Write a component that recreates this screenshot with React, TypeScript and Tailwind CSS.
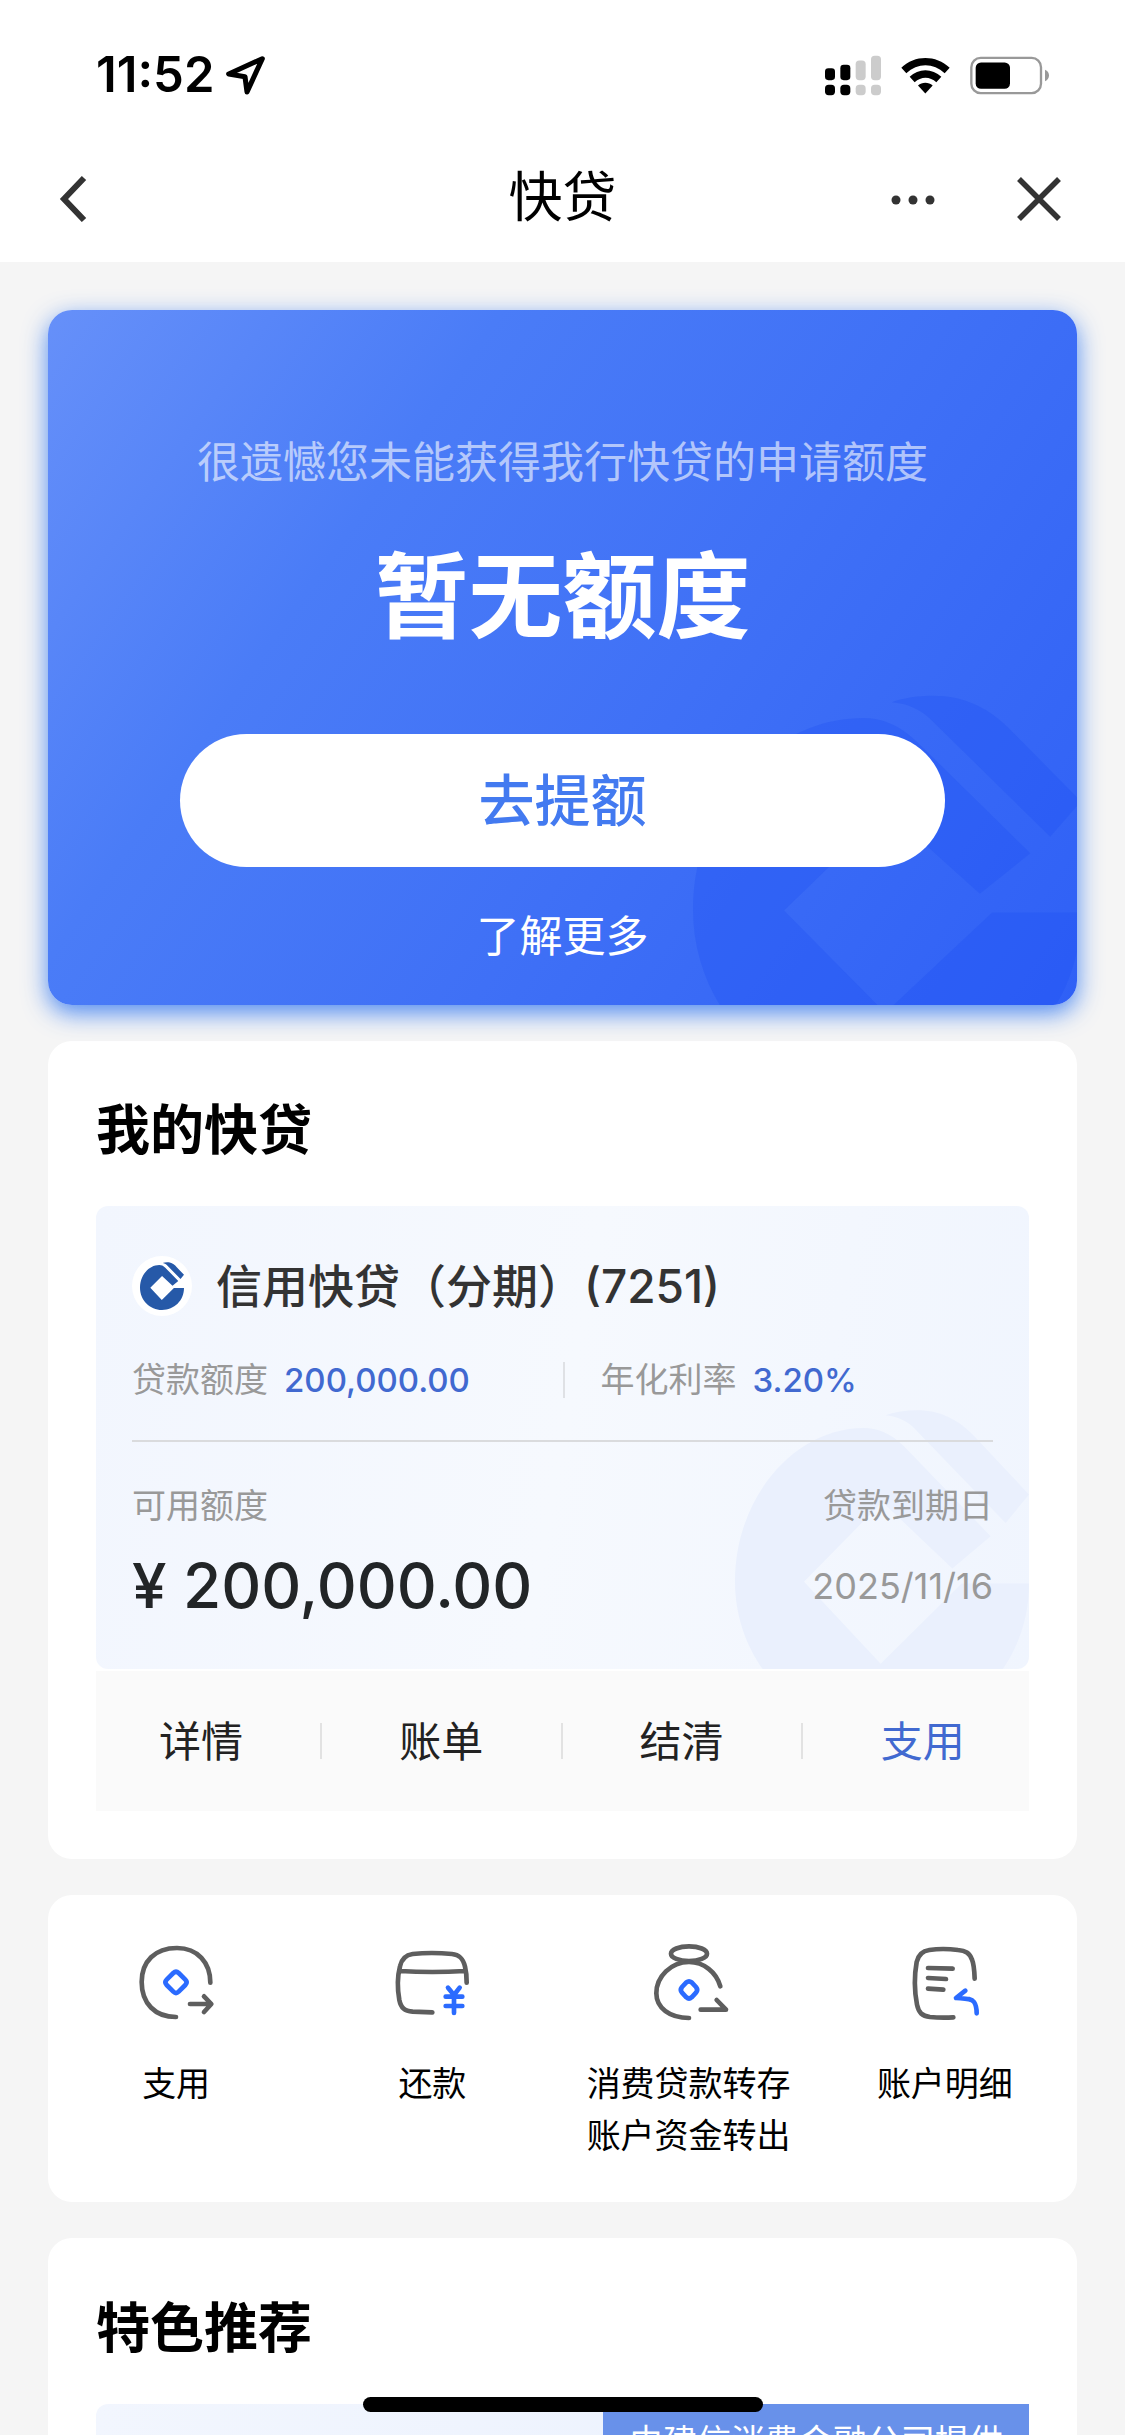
import React from "react";

function BankMark({ className }: { className: string }) {
  return (
    <svg viewBox="103 50 882 970" preserveAspectRatio="none" fill="currentColor" className={className} aria-hidden="true">
      <path d="M985 577H783L540 818L310 572L545 332L755 532L870 435L610 165C570 125 530 110 490 110C280 110 103 320 103 570C103 820 300 1020 545 1020C790 1020 985 830 985 577Z" />
      <path d="M555 72C600 55 660 53 700 62C760 76 800 110 840 155L985 310L915 395L640 110C620 90 590 75 555 72Z" />
    </svg>
  );
}

function StatusBar() {
  return (
    <div className="flex h-[134px] items-center justify-between pt-4 pr-[75px] pl-24">
      <div className="flex items-center gap-3">
        <span className="text-[49px] leading-[60px] font-semibold">11:52</span>
        <svg viewBox="446 46 118 118" className="size-10" fill="none" stroke="#000" strokeWidth="15" strokeLinejoin="round" aria-hidden="true">
          <path d="M553 57L454 102L502 110L508 155Z" />
        </svg>
      </div>
      <div className="flex items-center gap-5">
        <svg viewBox="39 42 168 122" className="h-[41px] w-14" aria-hidden="true">
          <rect x="39" y="81" width="30" height="36" rx="10" />
          <rect x="85" y="71" width="30" height="46" rx="10" />
          <rect x="131" y="58" width="30" height="59" rx="11" fill="#ccc" />
          <rect x="177" y="44" width="30" height="73" rx="11" fill="#ccc" />
          <rect x="39" y="131" width="30" height="31" rx="11" />
          <rect x="85" y="131" width="30" height="31" rx="11" />
          <rect x="131" y="131" width="30" height="31" rx="11" fill="#ccc" />
          <rect x="177" y="131" width="30" height="31" rx="11" fill="#ccc" />
        </svg>
        <svg viewBox="270 42 147 122" className="h-[41px] w-[49px]" aria-hidden="true">
          <path d="M271 80C311 41 375 41 416 80L401 96C368 64 319 64 286 96Z" />
          <path d="M296 107C322 81 364 81 391 107L376 123C357 105 330 105 311 123Z" />
          <path d="M321 133C333 122 353 122 365 133L343 157Z" />
        </svg>
        <svg viewBox="480 42 240 122" className="h-[41px] w-20" aria-hidden="true">
          <rect x="484" y="50" width="209" height="106" rx="28" fill="none" stroke="#999" strokeWidth="7" />
          <rect x="497" y="64" width="103" height="79" rx="16" />
          <path d="M705 86C721 92 721 114 705 120Z" fill="#999" />
        </svg>
      </div>
    </div>
  );
}

function NavBar() {
  return (
    <div className="grid h-32 grid-cols-[1fr_auto_1fr] items-center px-14">
      <button aria-label="返回" className="flex size-12 items-center">
        <svg viewBox="0 0 48 48" className="size-12" fill="none" stroke="#333" strokeWidth="6" aria-hidden="true">
          <path d="M28 4L8 25L28 46" />
        </svg>
      </button>
      <h1 className="text-center text-[54px] leading-[70px]">快贷</h1>
      <div className="flex items-center justify-end gap-[78px] pr-[6px]">
        <button aria-label="更多">
          <svg viewBox="0 0 48 48" className="size-12" fill="#333" aria-hidden="true">
            <circle cx="7" cy="26" r="4.5" />
            <circle cx="24" cy="26" r="4.5" />
            <circle cx="41" cy="26" r="4.5" />
          </svg>
        </button>
        <button aria-label="关闭">
          <svg viewBox="0 0 48 48" className="size-12" fill="none" stroke="#333" strokeWidth="5.5" aria-hidden="true">
            <path d="M4 5L44 45M44 5L4 45" />
          </svg>
        </button>
      </div>
    </div>
  );
}

function Hero() {
  return (
    <section className="relative flex flex-col items-center rounded-3xl bg-[linear-gradient(125deg,#6690f9_0%,#4a7cf7_30%,#3f70f6_60%,#2f60f6_100%)] px-[132px] pt-[122px] pb-[39px] text-white shadow-[0_8px_24px_rgba(50,120,240,0.85)]">
      <div className="absolute inset-0 overflow-hidden rounded-3xl">
        <BankMark className="absolute -right-1 bottom-[-92px] h-[404px] w-[388px] text-[#1f4ff2]/30" />
      </div>
      <p className="relative text-[43px] leading-[60px] whitespace-nowrap text-white/60">很遗憾您未能获得我行快贷的申请额度</p>
      <p className="relative mt-[45px] text-[94px] leading-[120px] font-bold">暂无额度</p>
      <button className="relative mt-[77px] h-[133px] w-full rounded-full bg-white text-[56px] font-medium text-[#437af0]">去提额</button>
      <a href="#more" className="relative mt-[39px] text-[43px] leading-[60px]">了解更多</a>
    </section>
  );
}

const actions = ["详情", "账单", "结清", "支用"];

function MyLoans() {
  return (
    <section className="mt-9 rounded-3xl bg-white px-12 pt-[55px] pb-12">
      <h2 className="text-[54px] leading-[70px] font-bold">我的快贷</h2>
      <div className="relative mt-10 overflow-hidden rounded-xl bg-[linear-gradient(100deg,#f2f6fe_0%,#f6f9fe_50%,#f0f5fe_100%)] px-9 pt-[50px] pb-[43px]">
        <BankMark className="absolute right-0 bottom-[-62px] h-[323px] w-[294px] text-[#eaf0fd]" />
        <div className="relative flex items-center gap-6 text-[#333]">
          <span className="flex size-[60px] items-center justify-center rounded-full bg-white">
            <BankMark className="h-12 w-11 text-[#2659a8]" />
          </span>
          <h3 className="text-[46px] leading-[60px] font-medium">信用快贷（分期）(7251)</h3>
        </div>
        <div className="relative mt-10 grid grid-cols-2 items-center text-[34px] leading-[48px] text-[#999]">
          <p className="flex items-center gap-4">
            贷款额度<span className="text-[33px] font-medium text-[#4169d0]">200,000.00</span>
          </p>
          <div className="flex items-center">
            <span className="h-9 w-0.5 bg-[#dfe1e5]" />
            <p className="ml-9 flex items-center gap-4">
              年化利率<span className="text-[33px] font-medium text-[#4169d0]">3.20%</span>
            </p>
          </div>
        </div>
        <hr className="relative mt-9 border-t-2 border-[#dadbdd]" />
        <div className="relative mt-10 flex justify-between">
          <div>
            <p className="text-[34px] leading-[48px] text-[#999]">可用额度</p>
            <p className="mt-4 text-[62px] leading-[80px] font-medium text-[#222527]">¥ 200,000.00</p>
          </div>
          <div className="text-right text-[#999]">
            <p className="text-[34px] leading-[48px]">贷款到期日</p>
            <p className="mt-4 text-[36px] leading-[80px]">2025/11/16</p>
          </div>
        </div>
      </div>
      <div className="mt-0.5 overflow-hidden bg-[#fafafa]">
        <div className="-mx-3.5 grid h-[140px] grid-cols-4 items-center">
          {actions.map((label, i) => (
            <div key={label} className="flex items-center">
              <button className={i === 3 ? "flex-1 text-[42px] text-[#4169d0]" : "flex-1 text-[42px] text-[#222]"}>{label}</button>
              {i < 3 && <span className="h-9 w-0.5 bg-[#e2e2e2]" />}
            </div>
          ))}
        </div>
      </div>
    </section>
  );
}

const services = [
  {
    lines: ["支用"],
    view: "68 60 258 258",
    art: (
      <>
        <path d="M300 188C300 128 262 84 200 84C134 84 94 124 94 186C94 250 134 291 197 291" />
        <path d="M239 252H302M281 229L303 252L281 276" />
        <path stroke="#2b6bff" d="M189 159Q197 151 205 159L225 179Q233 187 225 195L205 215Q197 223 189 215L169 195Q161 187 169 179Z" />
      </>
    ),
  },
  {
    lines: ["还款"],
    view: "831 60 258 258",
    art: (
      <>
        <path d="M1064 188C1064 170 1062 152 1059 140C1053 114 1042 104 1020 102C980 98 938 98 902 102C880 105 869 116 864 139C856 170 857 212 862 240C867 264 877 273 902 275L961 277M864 153Q960 159 1059 153" />
        <path stroke="#2b6bff" d="M1008 203L1026 225L1043 203M1001 230H1051M1001 258H1051M1026 226V279" />
      </>
    ),
  },
  {
    lines: ["消费贷款转存", "账户资金转出"],
    view: "81 60 258 258",
    art: (
      <>
        <ellipse cx="210" cy="101" rx="54" ry="22" />
        <path d="M304 199C292 156 254 126 210 126C156 126 112 170 112 220C112 264 152 294 210 294" />
        <path d="M245 269H321L293 240" />
        <path stroke="#2b6bff" d="M202 187Q210 181 218 187L231 201Q238 210 231 218L218 232Q210 239 202 232L189 218Q182 210 189 201Z" />
      </>
    ),
  },
  {
    lines: ["账户明细"],
    view: "858 60 258 258",
    art: (
      <>
        <path d="M1076 176C1075 148 1074 133 1068 119C1061 98 1048 92 1026 90C996 86 966 86 940 90C918 93 907 104 902 126C895 165 896 218 903 254C908 278 918 288 942 291C966 293 990 293 1012 292" />
        <path d="M936 144L1010 146M936 174L990 177M936 206L982 209" />
        <path stroke="#2b6bff" d="M1048 212L1020 234C1050 236 1066 235 1074 246C1081 256 1082 268 1082 280" />
      </>
    ),
  },
];

function Services() {
  return (
    <section className="mt-9 grid grid-cols-4 rounded-3xl bg-white pt-[45px] pr-1 pb-10">
      {services.map((s) => (
        <button key={s.lines[0]} className="flex flex-col items-center">
          <svg viewBox={s.view} className="size-[86px]" fill="none" stroke="#5e5e5e" strokeWidth="14" strokeLinecap="round" strokeLinejoin="round" aria-hidden="true">
            {s.art}
          </svg>
          <span className="mt-8 flex flex-col text-[34px] leading-[52px] whitespace-nowrap">
            {s.lines.map((line) => (
              <span key={line}>{line}</span>
            ))}
          </span>
        </button>
      ))}
    </section>
  );
}

function Featured() {
  return (
    <section className="mt-9 rounded-t-3xl bg-white px-12 pt-14">
      <h2 className="text-[54px] leading-[70px] font-bold">特色推荐</h2>
      <div className="mt-10 flex h-[300px] items-start justify-end overflow-hidden rounded-tl-xl bg-[linear-gradient(100deg,#f2f6fe,#eaf1fe)]">
        <span className="bg-[#6891ea] px-[26px] pt-3 pb-2 text-[34px] leading-[52px] text-white">由建信消费金融公司提供</span>
      </div>
    </section>
  );
}

export default function App() {
  return (
    <div className="relative flex h-screen flex-col bg-[#f5f5f5] font-['Inter','Noto_Sans_CJK_SC',sans-serif] text-black" lang="zh-CN">
      <header className="shrink-0 bg-white">
        <StatusBar />
        <NavBar />
      </header>
      <main className="min-h-0 flex-1 overflow-y-auto px-12 pt-12 [scrollbar-width:none]">
        <Hero />
        <MyLoans />
        <Services />
        <Featured />
      </main>
      <div className="absolute bottom-[23px] left-1/2 h-[15px] w-[400px] -translate-x-1/2 rounded-full bg-black" />
    </div>
  );
}
